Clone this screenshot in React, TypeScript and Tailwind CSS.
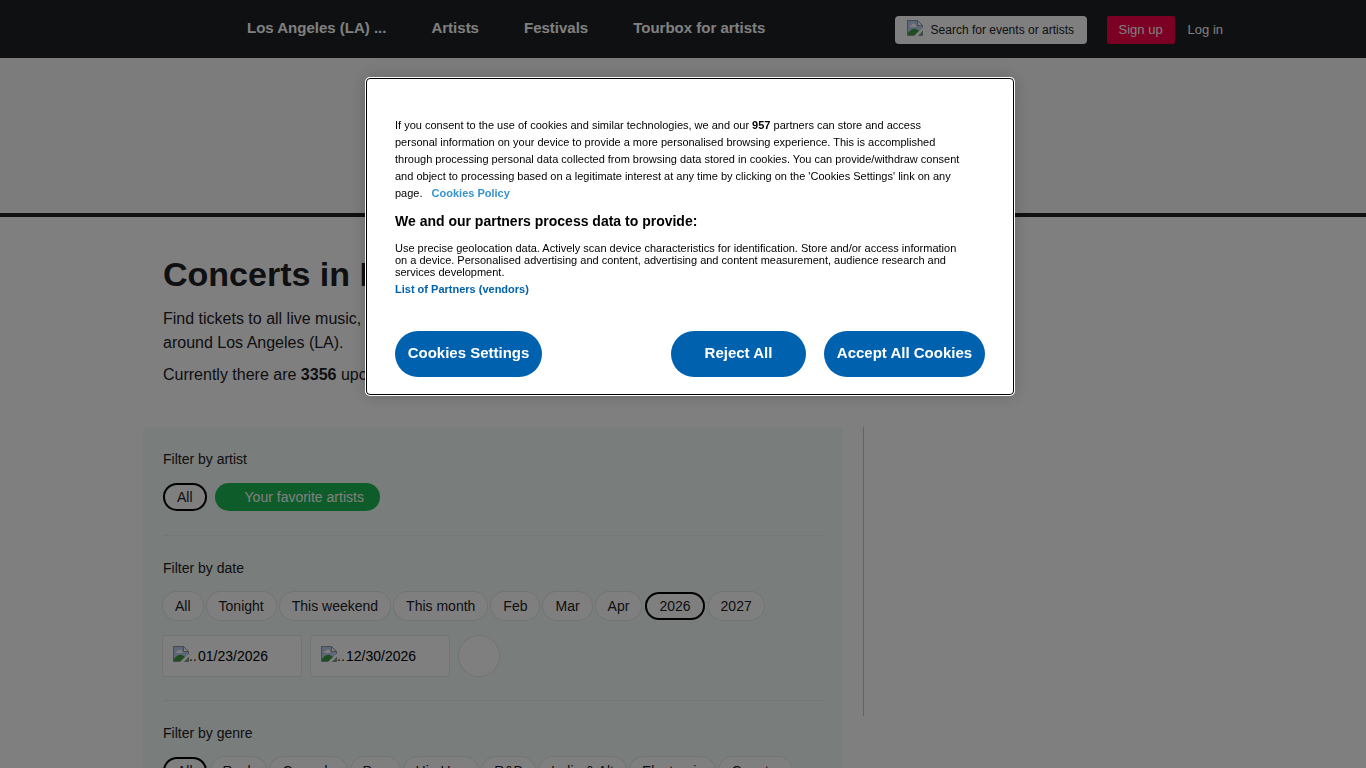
import { clsx } from 'clsx';

const NAV_LINKS = ['Los Angeles (LA) ...', 'Artists', 'Festivals', 'Tourbox for artists'];
const DATES = ['All', 'Tonight', 'This weekend', 'This month', 'Feb', 'Mar', 'Apr', '2026', '2027'];
const GENRES = ['All', 'Rock', 'Comedy', 'Pop', 'Hip Hop', 'R&B', 'Indie & Alt', 'Electronic', 'Country'];

function BrokenImage() {
  return (
    <svg width="16" height="16" viewBox="0 0 16 16" className="mb-1 shrink-0" aria-hidden="true">
      <path d="M0.5 0.5h10l5 5v10h-15z" fill="#bccff0" stroke="#8e949c" />
      <path d="M3 7a2 2 0 0 1 2-2 2 2 0 0 1 4 1 1 1 0 0 1 0 1z" fill="#fff" />
      <path d="M1 15v-2q4-5 8-4l3 2-4 4z" fill="#3c9a3f" />
      <path d="M10.5 0.5v5h5z" fill="#fff" stroke="#8e949c" />
      <path d="M7 16l9-8.500v3L11 16z" fill="#fff" />
      <path d="M11.500 15.500l4-4v4z" fill="#5fb062" stroke="#8e949c" strokeWidth="0.5" />
    </svg>
  );
}

function Pill({ label, active }: { label: string; active?: boolean }) {
  return (
    <button
      className={clsx(
        'h-7 rounded-full bg-white px-3 text-sm leading-6 whitespace-nowrap',
        active ? 'border-2 border-black' : 'ring-1 ring-[#e4e8e6]'
      )}
    >
      {label}
    </button>
  );
}

function DateField({ value, label }: { value: string; label: string }) {
  return (
    <label className="flex h-10 w-[138px] items-center rounded-xs bg-white pl-2.5 ring-1 ring-[#e4e8e6]">
      <BrokenImage />
      <span className="w-[9px] text-sm">..</span>
      <input aria-label={label} defaultValue={value} className="w-24 bg-transparent text-sm text-black outline-none" />
    </label>
  );
}

function Header() {
  return (
    <header className="bg-[#1c2024]">
      <div className="mx-auto flex h-[58px] max-w-[1080px] items-center justify-between pt-0.5">
        <nav className="flex gap-[45px] pb-1 pl-[104px] text-[15px] font-bold text-white">
          {NAV_LINKS.map((link) => (
            <a key={link} href="#">{link}</a>
          ))}
        </nav>
        <div className="flex items-center text-[13px] text-white">
          <label className="flex h-7 w-48 items-center gap-2 rounded-sm bg-white pl-3">
            <BrokenImage />
            <input
              aria-label="Search"
              placeholder="Search for events or artists"
              className="w-full min-w-0 bg-transparent text-xs text-black outline-none placeholder:text-[#1c2024]"
            />
          </label>
          <button className="ml-5 h-7 w-[68px] rounded-xs bg-[#f80046]">Sign up</button>
          <a href="#" className="ml-[13px]">Log in</a>
        </div>
      </div>
    </header>
  );
}

function Filters() {
  return (
    <section className="w-[700px] rounded-sm bg-[#f2faf6] px-5 pt-5 text-sm">
      <h2 className="leading-6">Filter by artist</h2>
      <div className="mt-3 flex gap-2">
        <Pill label="All" active />
        <button className="h-7 rounded-full bg-[#1db954] pr-4 pl-[30px] text-white">Your favorite artists</button>
      </div>

      <hr className="mt-6 mb-5 border-[#e6eeea]" />

      <h2 className="leading-6">Filter by date</h2>
      <div className="mt-3 flex gap-1">
        {DATES.map((date) => (
          <Pill key={date} label={date} active={date === '2026'} />
        ))}
      </div>
      <div className="mt-4 flex gap-2.5">
        <DateField value="01/23/2026" label="From" />
        <DateField value="12/30/2026" label="To" />
        <button aria-label="Apply dates" className="size-10 rounded-full bg-white ring-1 ring-[#e4e8e6]" />
      </div>

      <hr className="mt-6 mb-5 border-[#e6eeea]" />

      <h2 className="leading-6">Filter by genre</h2>
      <div className="mt-3 flex gap-1 pb-6">
        {GENRES.map((genre, i) => (
          <Pill key={genre} label={genre} active={i === 0} />
        ))}
      </div>
    </section>
  );
}

function CookieDialog() {
  const button = 'h-[46px] rounded-full bg-[#0061ae] pb-0.5 text-[15px] font-bold text-white';
  return (
    <div className="fixed inset-0 z-50 flex items-start justify-center bg-black/50 pt-[78px] pl-3.5">
      <div
        role="dialog"
        aria-label="Cookie consent"
        className="w-full max-w-[648px] rounded-sm border border-black bg-white px-7 pt-[38px] pb-[17px] text-[11px] text-black shadow-[0_0_18px_rgba(0,0,0,0.2)] ring-1 ring-white"
      >
        <p className="leading-[17px]">
          If you consent to the use of cookies and similar technologies, we and our <b>957</b> partners can store and access
          <br />
          personal information on your device to provide a more personalised browsing experience. This is accomplished
          <br />
          through processing personal data collected from browsing data stored in cookies. You can provide/withdraw consent
          <br />
          and object to processing based on a legitimate interest at any time by clicking on the 'Cookies Settings' link on any
          <br />
          page. <a href="#" className="ml-1.5 font-bold text-[#3693cf]">Cookies Policy</a>
        </p>
        <h2 className="mt-[9px] text-sm leading-5 font-bold">We and our partners process data to provide:</h2>
        <p className="mt-[11px] leading-3">
          Use precise geolocation data. Actively scan device characteristics for identification. Store and/or access information
          <br />
          on a device. Personalised advertising and content, advertising and content measurement, audience research and
          <br />
          services development.
        </p>
        <a href="#" className="block leading-[23px] font-bold text-[#0061ae]">List of Partners (vendors)</a>
        <div className="mt-[30px] flex">
          <button className={clsx(button, 'w-[147px]')}>Cookies Settings</button>
          <button className={clsx(button, 'ml-auto w-[135px]')}>Reject All</button>
          <button className={clsx(button, 'ml-[18px] w-[161px]')}>Accept All Cookies</button>
        </div>
      </div>
    </div>
  );
}

export default function App() {
  return (
    <div className="h-screen overflow-hidden bg-white font-['Liberation_Sans',Arial,sans-serif] text-[#1c2024]">
      <Header />
      <div className="h-[159px] border-b-4 border-[#1c2024] bg-[#f8f8f9]" />
      <main className="mx-auto max-w-[1080px]">
        <div className="px-5 pt-9">
          <h1 className="text-[34px] leading-[42px] font-bold">Concerts in Los Angeles (LA)</h1>
          <p className="mt-3 leading-6">
            Find tickets to all live music, concerts, tour dates and festivals in and
            <br />
            around Los Angeles (LA).
          </p>
          <p className="mt-2 leading-6">
            Currently there are <b>3356</b> upcoming events.
          </p>
        </div>
        <div className="mt-10 flex items-start gap-5">
          <Filters />
          <aside className="h-[289px] flex-1 border-l border-[#c8c8c8]" />
        </div>
      </main>
      <CookieDialog />
    </div>
  );
}
